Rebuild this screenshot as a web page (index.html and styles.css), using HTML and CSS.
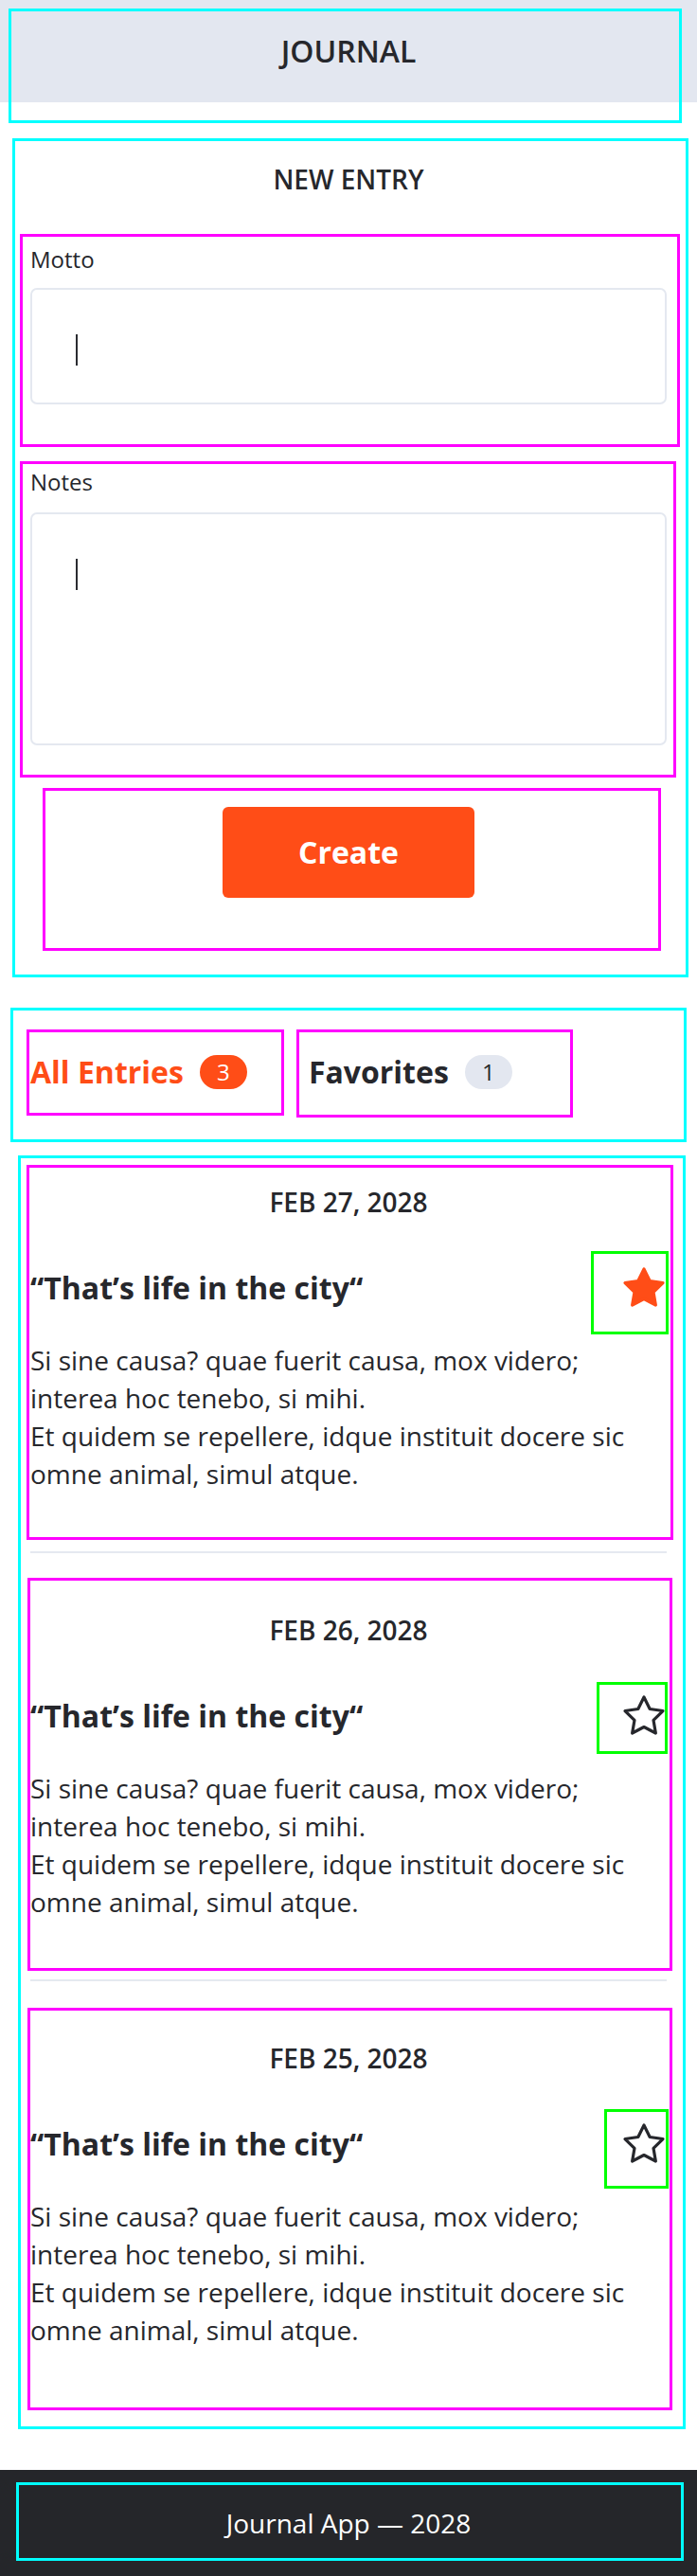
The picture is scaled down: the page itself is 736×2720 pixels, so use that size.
FILE: index.html
```html
<!DOCTYPE html>
<html lang="en">
<head>
<meta charset="utf-8">
<title>Journal</title>
<link rel="stylesheet" href="styles.css">
</head>
<body>
<header class="app-header">
  <h1 class="app-title">JOURNAL</h1>
</header>

<section class="new-entry">
  <h2 class="section-title">NEW ENTRY</h2>
  <div class="field field-motto">
    <label class="field-label" for="motto">Motto</label>
    <div class="control">
      <input id="motto" class="input" type="text">
      <span class="caret caret-input"></span>
    </div>
  </div>
  <div class="field field-notes">
    <label class="field-label" for="notes">Notes</label>
    <div class="control">
      <textarea id="notes" class="textarea"></textarea>
      <span class="caret caret-textarea"></span>
    </div>
  </div>
  <div class="actions">
    <button class="btn-create" type="button">Create</button>
  </div>
</section>

<nav class="tabs">
  <div class="tab-row">
    <button class="tab tab-all active" type="button">All Entries <span class="badge">3</span></button>
    <button class="tab tab-fav" type="button">Favorites <span class="badge">1</span></button>
  </div>
</nav>

<section class="entries">
  <article class="card">
    <div class="card-date">FEB 27, 2028</div>
    <div class="card-head">
      <h3 class="card-title">“That’s life in the city“</h3>
      <button class="star star-on" type="button" aria-label="Favorite">
        <svg viewBox="0 0 24 24" width="48" height="48"><polygon points="12 2 15.09 8.26 22 9.27 17 14.14 18.18 21.02 12 17.77 5.82 21.02 7 14.14 2 9.27 8.91 8.26 12 2"/></svg>
      </button>
    </div>
    <p class="card-text">Si sine causa? quae fuerit causa, mox videro; interea hoc tenebo, si mihi.<br>Et quidem se repellere, idque instituit docere sic omne animal, simul atque.</p>
  </article>
  <article class="card">
    <div class="card-date">FEB 26, 2028</div>
    <div class="card-head">
      <h3 class="card-title">“That’s life in the city“</h3>
      <button class="star" type="button" aria-label="Favorite">
        <svg viewBox="0 0 24 24" width="48" height="48"><polygon points="12 2 15.09 8.26 22 9.27 17 14.14 18.18 21.02 12 17.77 5.82 21.02 7 14.14 2 9.27 8.91 8.26 12 2"/></svg>
      </button>
    </div>
    <p class="card-text">Si sine causa? quae fuerit causa, mox videro; interea hoc tenebo, si mihi.<br>Et quidem se repellere, idque instituit docere sic omne animal, simul atque.</p>
  </article>
  <article class="card">
    <div class="card-date">FEB 25, 2028</div>
    <div class="card-head">
      <h3 class="card-title">“That’s life in the city“</h3>
      <button class="star" type="button" aria-label="Favorite">
        <svg viewBox="0 0 24 24" width="48" height="48"><polygon points="12 2 15.09 8.26 22 9.27 17 14.14 18.18 21.02 12 17.77 5.82 21.02 7 14.14 2 9.27 8.91 8.26 12 2"/></svg>
      </button>
    </div>
    <p class="card-text">Si sine causa? quae fuerit causa, mox videro; interea hoc tenebo, si mihi.<br>Et quidem se repellere, idque instituit docere sic omne animal, simul atque.</p>
  </article>
</section>

<footer class="app-footer">
  <span class="footer-text">Journal App — 2028</span>
</footer>
</body>
</html>
```
FILE: styles.css
```css
* { box-sizing: border-box; }

html, body {
  margin: 0;
  padding: 0;
  background: #ffffff;
}

body {
  font-family: "Open Sans", "Noto Sans", "Liberation Sans", sans-serif;
  color: #26272c;
  width: 736px;
}

/* annotation overlays */
.app-header, .new-entry, .field, .actions, .tabs, .tab, .entries, .card, .star, .app-footer {
  position: relative;
}
.app-header::after, .new-entry::after, .field::after, .actions::after,
.tabs::after, .tab::after, .entries::after, .card::after, .star::after, .app-footer::after {
  content: "";
  position: absolute;
  pointer-events: none;
  border: 3px solid #00ffff;
}
.field::after, .actions::after, .tab::after, .card::after { border-color: #ff00ff; }
.star::after { border-color: #00ff00; }

/* header */
.app-header {
  height: 108px;
  background: #e3e7f0;
  display: flex;
  align-items: center;
  justify-content: center;
}
.app-header::after { top: 9px; left: 9px; right: 16px; bottom: -22px; }
.app-title {
  margin: 0;
  font-size: 32px;
  font-weight: 600;
  line-height: 44px;
}

/* new entry form */
.new-entry {
  margin-top: 38px;
  padding: 24px 32px 84px;
}
.new-entry::after { top: 0; bottom: 0; left: 13px; right: 9px; }
.section-title {
  margin: 0;
  text-align: center;
  font-size: 28px;
  font-weight: 600;
  line-height: 38px;
}
.field { display: flex; flex-direction: column; }
.field-motto { margin-top: 49px; gap: 14px; }
.field-motto::after { top: -10px; bottom: -45px; left: -11px; right: -14px; }
.field-notes { margin-top: 65px; gap: 16px; }
.field-notes::after { top: -5px; bottom: -34px; left: -11px; right: -10px; }
.field-label {
  font-size: 24px;
  line-height: 33px;
}
.control { position: relative; }
.input, .textarea {
  display: block;
  width: 100%;
  margin: 0;
  border: 2px solid #e4e8f0;
  border-radius: 7px;
  background: #fff;
  font: inherit;
  font-size: 24px;
  color: inherit;
  padding: 0 48px;
  outline: none;
  resize: none;
}
.input { height: 123px; }
.textarea { height: 246px; padding-top: 48px; }
.caret {
  position: absolute;
  left: 48px;
  width: 2px;
  height: 33px;
  background: #2b2c31;
}
.caret-input { top: 49px; }
.caret-textarea { top: 49px; }

.actions {
  margin-top: 65px;
  display: flex;
  justify-content: center;
}
.actions::after { top: -20px; bottom: -56px; left: 13px; right: 6px; }
.btn-create {
  width: 266px;
  height: 96px;
  border: 0;
  border-radius: 6px;
  background: #ff4d17;
  color: #ffffff;
  font: inherit;
  font-size: 32px;
  font-weight: 700;
  line-height: 44px;
}

/* tabs */
.tabs {
  margin-top: 32px;
  padding: 46px 32px 52px;
}
.tabs::after { top: 0; bottom: 0; left: 11px; right: 11px; }
.tab-row {
  display: flex;
  gap: 65px;
  height: 44px;
  align-items: center;
}
.tab {
  display: flex;
  align-items: center;
  gap: 17px;
  padding: 0;
  border: 0;
  background: none;
  font: inherit;
  font-size: 32px;
  font-weight: 700;
  line-height: 44px;
  color: #26272c;
}
.tab.active { color: #ff4d17; }
.tab-all::after { top: -23px; bottom: -24px; left: -4px; right: -39px; }
.tab-fav::after { top: -23px; bottom: -26px; left: -13px; right: -64px; }
.badge {
  display: inline-flex;
  align-items: center;
  justify-content: center;
  height: 36px;
  min-width: 50px;
  padding: 0 18px;
  border-radius: 18px;
  font-size: 24px;
  font-weight: 400;
  line-height: 36px;
  background: #e3e7f0;
  color: #26272c;
}
.tab.active .badge { background: #ff4d17; color: #fff; }

/* entries */
.entries {
  margin-top: 14px;
  padding: 0 32px 55px;
}
.entries::after { top: 0; bottom: 0; left: 19px; right: 12px; }
.card { padding: 30px 0; }
.card + .card {
  margin-top: 32px;
  border-top: 2px solid #e5e9f0;
  padding-top: 62px;
}
.card:nth-child(1)::after { top: 10px; bottom: -20px; left: -4px; right: -7px; }
.card:nth-child(2)::after { top: 26px; bottom: -23px; left: -3px; right: -6px; }
.card:nth-child(3)::after { top: 28px; bottom: -35px; left: -3px; right: -6px; }
.card-date {
  text-align: center;
  font-size: 28px;
  font-weight: 600;
  line-height: 38px;
}
.card-head {
  margin-top: 48px;
  height: 48px;
  display: flex;
  align-items: center;
  justify-content: space-between;
}
.card-title {
  margin: 0;
  font-size: 32px;
  font-weight: 700;
  line-height: 44px;
}
.star {
  width: 48px;
  height: 48px;
  padding: 0;
  border: 0;
  background: none;
  display: block;
}
.star svg {
  display: block;
  fill: none;
  stroke: #26272c;
  stroke-width: 1.6;
  stroke-linejoin: round;
}
.star-on svg { fill: #ff4d17; stroke: #ff4d17; }
.card:nth-child(1) .star::after { top: -15px; bottom: -25px; left: -32px; right: -2px; }
.card:nth-child(2) .star::after { top: -12px; bottom: -16px; left: -26px; right: -1px; }
.card:nth-child(3) .star::after { top: -13px; bottom: -23px; left: -18px; right: -2px; }
.card-text {
  margin: 32px 0 0;
  font-size: 28px;
  line-height: 40px;
}

/* footer */
.app-footer {
  margin-top: 43px;
  height: 112px;
  background: #25262a;
  display: flex;
  align-items: center;
  justify-content: center;
}
.app-footer::after { top: 13px; bottom: 16px; left: 17px; right: 14px; }
.footer-text {
  color: #ffffff;
  font-size: 28px;
  line-height: 38px;
}
```
